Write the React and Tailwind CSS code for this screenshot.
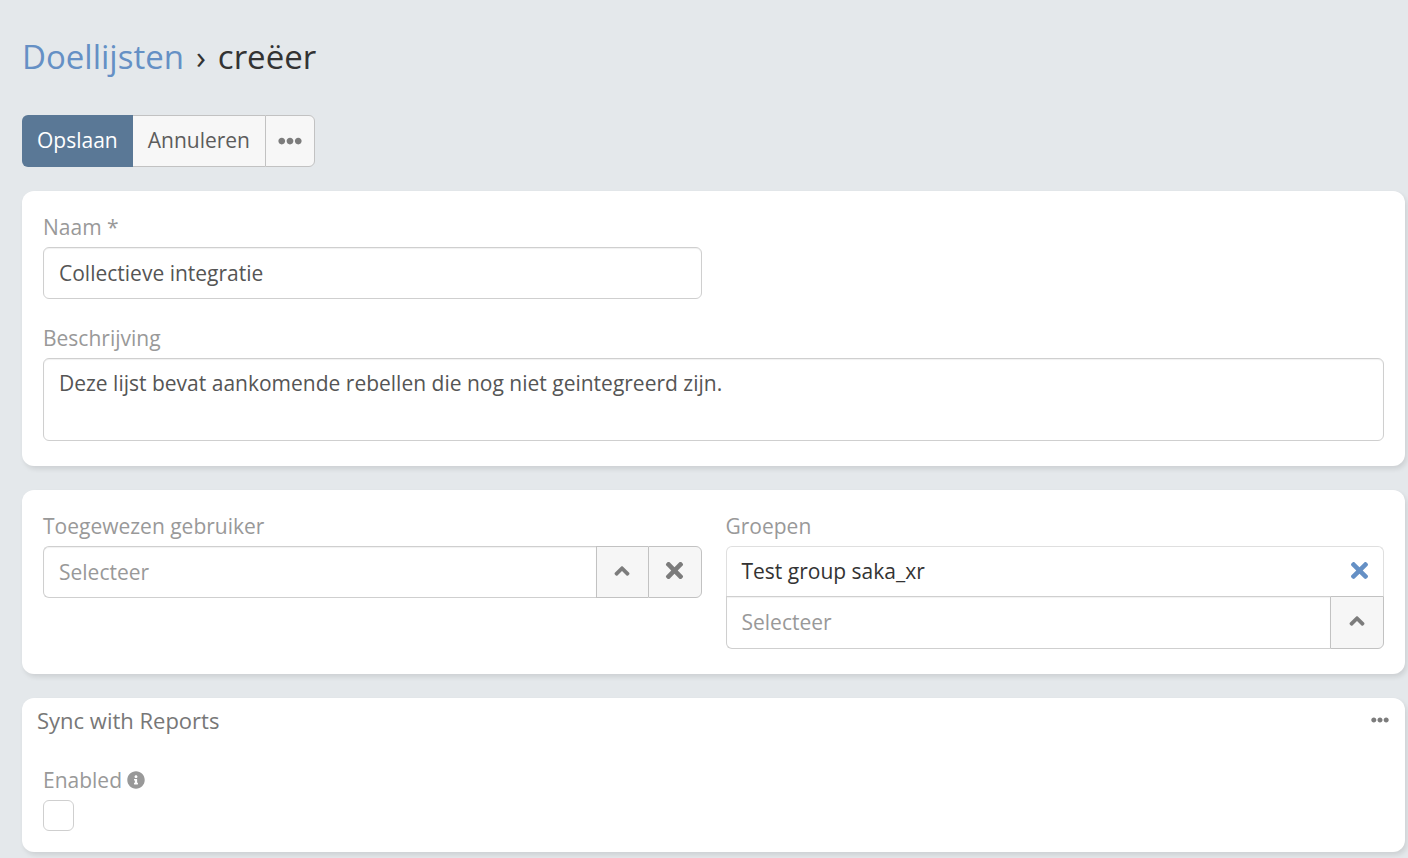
import { useState } from "react";
import {
	FaAngleUp,
	FaEllipsisH,
	FaInfoCircle,
	FaTimes,
} from "react-icons/fa";

const inputClass =
	"block w-full min-w-0 rounded-md border border-[#cfcfcf] bg-white px-[15px] text-[#555] placeholder:text-[#999] placeholder:opacity-100 inset-shadow-[0_1px_1px_rgba(0,0,0,0.06)] focus:outline-none focus:border-[#6590c5]";

const addonClass =
	"flex shrink-0 items-center justify-center border border-[#c2c2c2] bg-[#f6f6f6] pb-[3px] text-[#7c7c7c] hover:bg-[#ececec]";

const Panel = ({ children }) => (
	<section className="rounded-xl bg-white shadow-[2px_3px_5px_rgba(0,0,0,0.1)]">
		{children}
	</section>
);

const Label = ({ children, ...props }) => (
	<label className="mb-[5px] block leading-[30px] text-[#999]" {...props}>
		{children}
	</label>
);

const App = () => {
	const [name, setName] = useState("Collectieve integratie");
	const [description, setDescription] = useState(
		"Deze lijst bevat aankomende rebellen die nog niet geintegreerd zijn.",
	);
	const [user, setUser] = useState("");
	const [groups, setGroups] = useState(["Test group saka_xr"]);
	const [enabled, setEnabled] = useState(false);

	return (
		<main className="min-h-screen bg-[#e4e8eb] pt-8 pr-[3px] pb-[6px] pl-[22px] font-['Open_Sans',sans-serif] text-[21px] leading-[30px]">
			<h1 className="mb-[33px] flex gap-3 text-[33px] leading-[50px] text-[#333]">
				<a href="#doellijsten" className="text-[#6590c5]">
					Doellijsten
				</a>
				<span>›</span>
				<span>creëer</span>
			</h1>

			<div className="mb-6 flex">
				<button
					type="button"
					className="h-[52px] rounded-l-md bg-[#5a7896] px-[15px] pb-[2px] text-white"
				>
					Opslaan
				</button>
				<button
					type="button"
					className="h-[52px] border-y border-[#c2c2c2] bg-[#f7f7f7] px-[15px] pb-[2px] text-[#5c5c5c]"
				>
					Annuleren
				</button>
				<button
					type="button"
					aria-label="Meer"
					className="flex h-[52px] w-[50px] items-center justify-center rounded-r-md border border-[#c2c2c2] bg-[#f7f7f7] text-[#7c7c7c]"
				>
					<FaEllipsisH className="size-6" />
				</button>
			</div>

			<div className="flex flex-col gap-6">
				<Panel>
					<div className="flex flex-col gap-6 px-[21px] pt-[21px] pb-[25px]">
						<div className="grid grid-cols-2 gap-6">
							<div>
								<Label htmlFor="name">Naam *</Label>
								<input
									id="name"
									type="text"
									value={name}
									onChange={(e) => setName(e.target.value)}
									className={`${inputClass} h-[52px]`}
								/>
							</div>
						</div>
						<div>
							<Label htmlFor="description">Beschrijving</Label>
							<textarea
								id="description"
								value={description}
								onChange={(e) => setDescription(e.target.value)}
								className={`${inputClass} h-[83px] resize-none py-[9px]`}
							/>
						</div>
					</div>
				</Panel>

				<Panel>
					<div className="grid grid-cols-2 gap-6 px-[21px] pt-[21px] pb-[25px]">
						<div>
							<Label htmlFor="user">Toegewezen gebruiker</Label>
							<div className="flex">
								<input
									id="user"
									type="text"
									placeholder="Selecteer"
									value={user}
									onChange={(e) => setUser(e.target.value)}
									className={`${inputClass} h-[52px] rounded-r-none border-r-0`}
								/>
								<button
									type="button"
									aria-label="Selecteer gebruiker"
									className={`${addonClass} w-[52px] border-r-0`}
								>
									<FaAngleUp className="size-6" />
								</button>
								<button
									type="button"
									aria-label="Wis gebruiker"
									onClick={() => setUser("")}
									className={`${addonClass} w-[54px] rounded-r-md`}
								>
									<FaTimes className="size-[25px]" />
								</button>
							</div>
						</div>

						<div>
							<Label htmlFor="groups">Groepen</Label>
							<ul className="rounded-t-md border border-b-0 border-[#dfdfdf]">
								{groups.map((group) => (
									<li
										key={group}
										className="flex h-[49px] items-center justify-between px-[15px] pb-[2px] text-[#333]"
									>
										{group}
										<button
											type="button"
											aria-label={`Verwijder ${group}`}
											onClick={() =>
												setGroups(groups.filter((g) => g !== group))
											}
											className="text-[#6590c5]"
										>
											<FaTimes className="h-[25px] w-[17px]" />
										</button>
									</li>
								))}
							</ul>
							<div className="flex">
								<input
									id="groups"
									type="text"
									placeholder="Selecteer"
									className={`${inputClass} h-[53px] rounded-t-none rounded-r-none border-r-0 pb-[2px]`}
								/>
								<button
									type="button"
									aria-label="Selecteer groep"
									className={`${addonClass} w-[54px] rounded-br-md`}
								>
									<FaAngleUp className="size-6" />
								</button>
							</div>
						</div>
					</div>
				</Panel>

				<Panel>
					<header className="flex h-[46px] items-center justify-between pr-4 pb-[2px] pl-[15px]">
						<h2 className="text-[22px] text-[#777]">Sync with Reports</h2>
						<button
							type="button"
							aria-label="Paneelopties"
							className="text-[#7c7c7c]"
						>
							<FaEllipsisH className="size-[18px]" />
						</button>
					</header>
					<div className="p-[21px]">
						<div className="flex items-start gap-[5px]">
							<Label htmlFor="enabled">Enabled</Label>
							<FaInfoCircle className="mt-[6px] size-[18px] text-[#999]" />
						</div>
						<input
							id="enabled"
							type="checkbox"
							checked={enabled}
							onChange={(e) => setEnabled(e.target.checked)}
							className="block size-[31px] appearance-none rounded-md border border-[#cfcfcf] bg-white checked:bg-[#6590c5]"
						/>
					</div>
				</Panel>
			</div>
		</main>
	);
};

export default App;
